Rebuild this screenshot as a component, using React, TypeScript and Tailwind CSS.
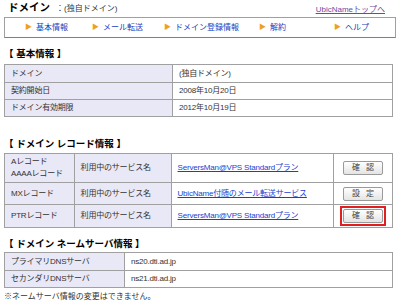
const font = "font-['Liberation_Sans','Noto_Sans_CJK_JP',sans-serif]";

const navItems = [
  { label: '基本情報', w: 'w-[67px]' },
  { label: 'メール転送', w: 'w-[72px]' },
  { label: 'ドメイン登録情報', w: 'w-[95px]' },
  { label: '解約', w: 'w-[75px]' },
  { label: 'ヘルプ', w: 'w-[55px]' },
];

function Heading({ children }: { children: React.ReactNode }) {
  return <div className="text-[9.5px] font-bold text-black leading-[12px] pl-[4px] whitespace-nowrap">{children}</div>;
}

function Btn({ label, red }: { label: string; red?: boolean }) {
  return (
    <div className={red ? 'inline-flex border-2 border-[#e02020] p-[1px]' : 'inline-flex p-[3px]'}>
      <button className="w-[40px] h-[14px] border border-[#9a9a9a] rounded-[2px] bg-gradient-to-b from-white to-[#e4e4e4] text-[8px] leading-[12px] text-[#444] tracking-[6px] pl-[6px]">
        {label}
      </button>
    </div>
  );
}

const cell = 'border border-[#a0a0a0] px-[6px] py-0 text-[8px] leading-[10px] tracking-[-0.2px] text-[#333] whitespace-nowrap';
const label = cell + ' bg-[#e8e8f6]';
const link = 'text-[#1a3fd0] underline';

export default function App() {
  return (
    <div className={`w-[400px] h-[307px] bg-white overflow-hidden ${font}`}>
      <div className="flex items-end justify-between pl-[8px] pr-[15px] pt-[2px] h-[15px]">
        <div className="flex items-baseline">
          <span className="text-[10.5px] font-bold text-black leading-[13px]">ドメイン</span>
          <span className="text-[8px] text-[#333] ml-[6px]">：(独自ドメイン)</span>
        </div>
        <a className="text-[8px] text-[#6a4aa8] underline leading-[11px]">UbicNameトップへ</a>
      </div>
      <div className="mx-[4px] mt-[2px] h-[21px] border border-[#a0a0a0] border-b-[#808080] flex items-center pl-[20px]">
        {navItems.map((n) => (
          <div key={n.label} className={`${n.w} flex items-center text-[8px] text-[#2040c0] whitespace-nowrap`}>
            <span className="text-[#f0a020] text-[7px] mr-[4px]">▶</span>
            {n.label}
          </div>
        ))}
      </div>

      <div className="mt-[10px]">
        <Heading>【 基本情報 】</Heading>
      </div>
      <table className="mx-[4px] mt-[4px] w-[389px] border-collapse">
        <tbody>
          <tr className="h-[18px]">
            <td className={`${label} w-[168px]`}>ドメイン</td>
            <td className={cell}>(独自ドメイン)</td>
          </tr>
          <tr className="h-[17px]">
            <td className={label}>契約開始日</td>
            <td className={cell}>2008年10月20日</td>
          </tr>
          <tr className="h-[17px]">
            <td className={label}>ドメイン有効期限</td>
            <td className={cell}>2012年10月19日</td>
          </tr>
        </tbody>
      </table>

      <div className="mt-[21px]">
        <Heading>【 ドメイン レコード情報 】</Heading>
      </div>
      <table className="mx-[4px] mt-[3px] w-[389px] border-collapse">
        <tbody>
          <tr className="h-[29px]">
            <td className={`${label} w-[70px] leading-[12px]`}>Aレコード<br />AAAAレコード</td>
            <td className={`${label} w-[98px]`}>利用中のサービス名</td>
            <td className={`${cell} w-[164px]`}><a className={link}>ServersMan@VPS Standardプラン</a></td>
            <td className={`${cell} text-center px-0`}><Btn label="確認" /></td>
          </tr>
          <tr className="h-[22px]">
            <td className={label}>MXレコード</td>
            <td className={label}>利用中のサービス名</td>
            <td className={cell}><a className={link}>UbicName付随のメール転送サービス</a></td>
            <td className={`${cell} text-center px-0`}><Btn label="設定" /></td>
          </tr>
          <tr className="h-[23px]">
            <td className={label}>PTRレコード</td>
            <td className={label}>利用中のサービス名</td>
            <td className={cell}><a className={link}>ServersMan@VPS Standardプラン</a></td>
            <td className={`${cell} text-center px-0`}><Btn label="確認" red /></td>
          </tr>
        </tbody>
      </table>

      <div className="mt-[10px]">
        <Heading>【 ドメイン ネームサーバ情報 】</Heading>
      </div>
      <table className="mx-[4px] mt-[2px] w-[389px] border-collapse">
        <tbody>
          <tr className="h-[18px]">
            <td className={`${label} w-[120px]`}>プライマリDNSサーバ</td>
            <td className={cell}>ns20.dti.ad.jp</td>
          </tr>
          <tr className="h-[17px]">
            <td className={label}>セカンダリDNSサーバ</td>
            <td className={cell}>ns21.dti.ad.jp</td>
          </tr>
        </tbody>
      </table>
      <div className="text-[8px] leading-[10px] text-[#333] pl-[4px] mt-[4px]">※ネームサーバ情報の変更はできません。</div>
    </div>
  );
}
